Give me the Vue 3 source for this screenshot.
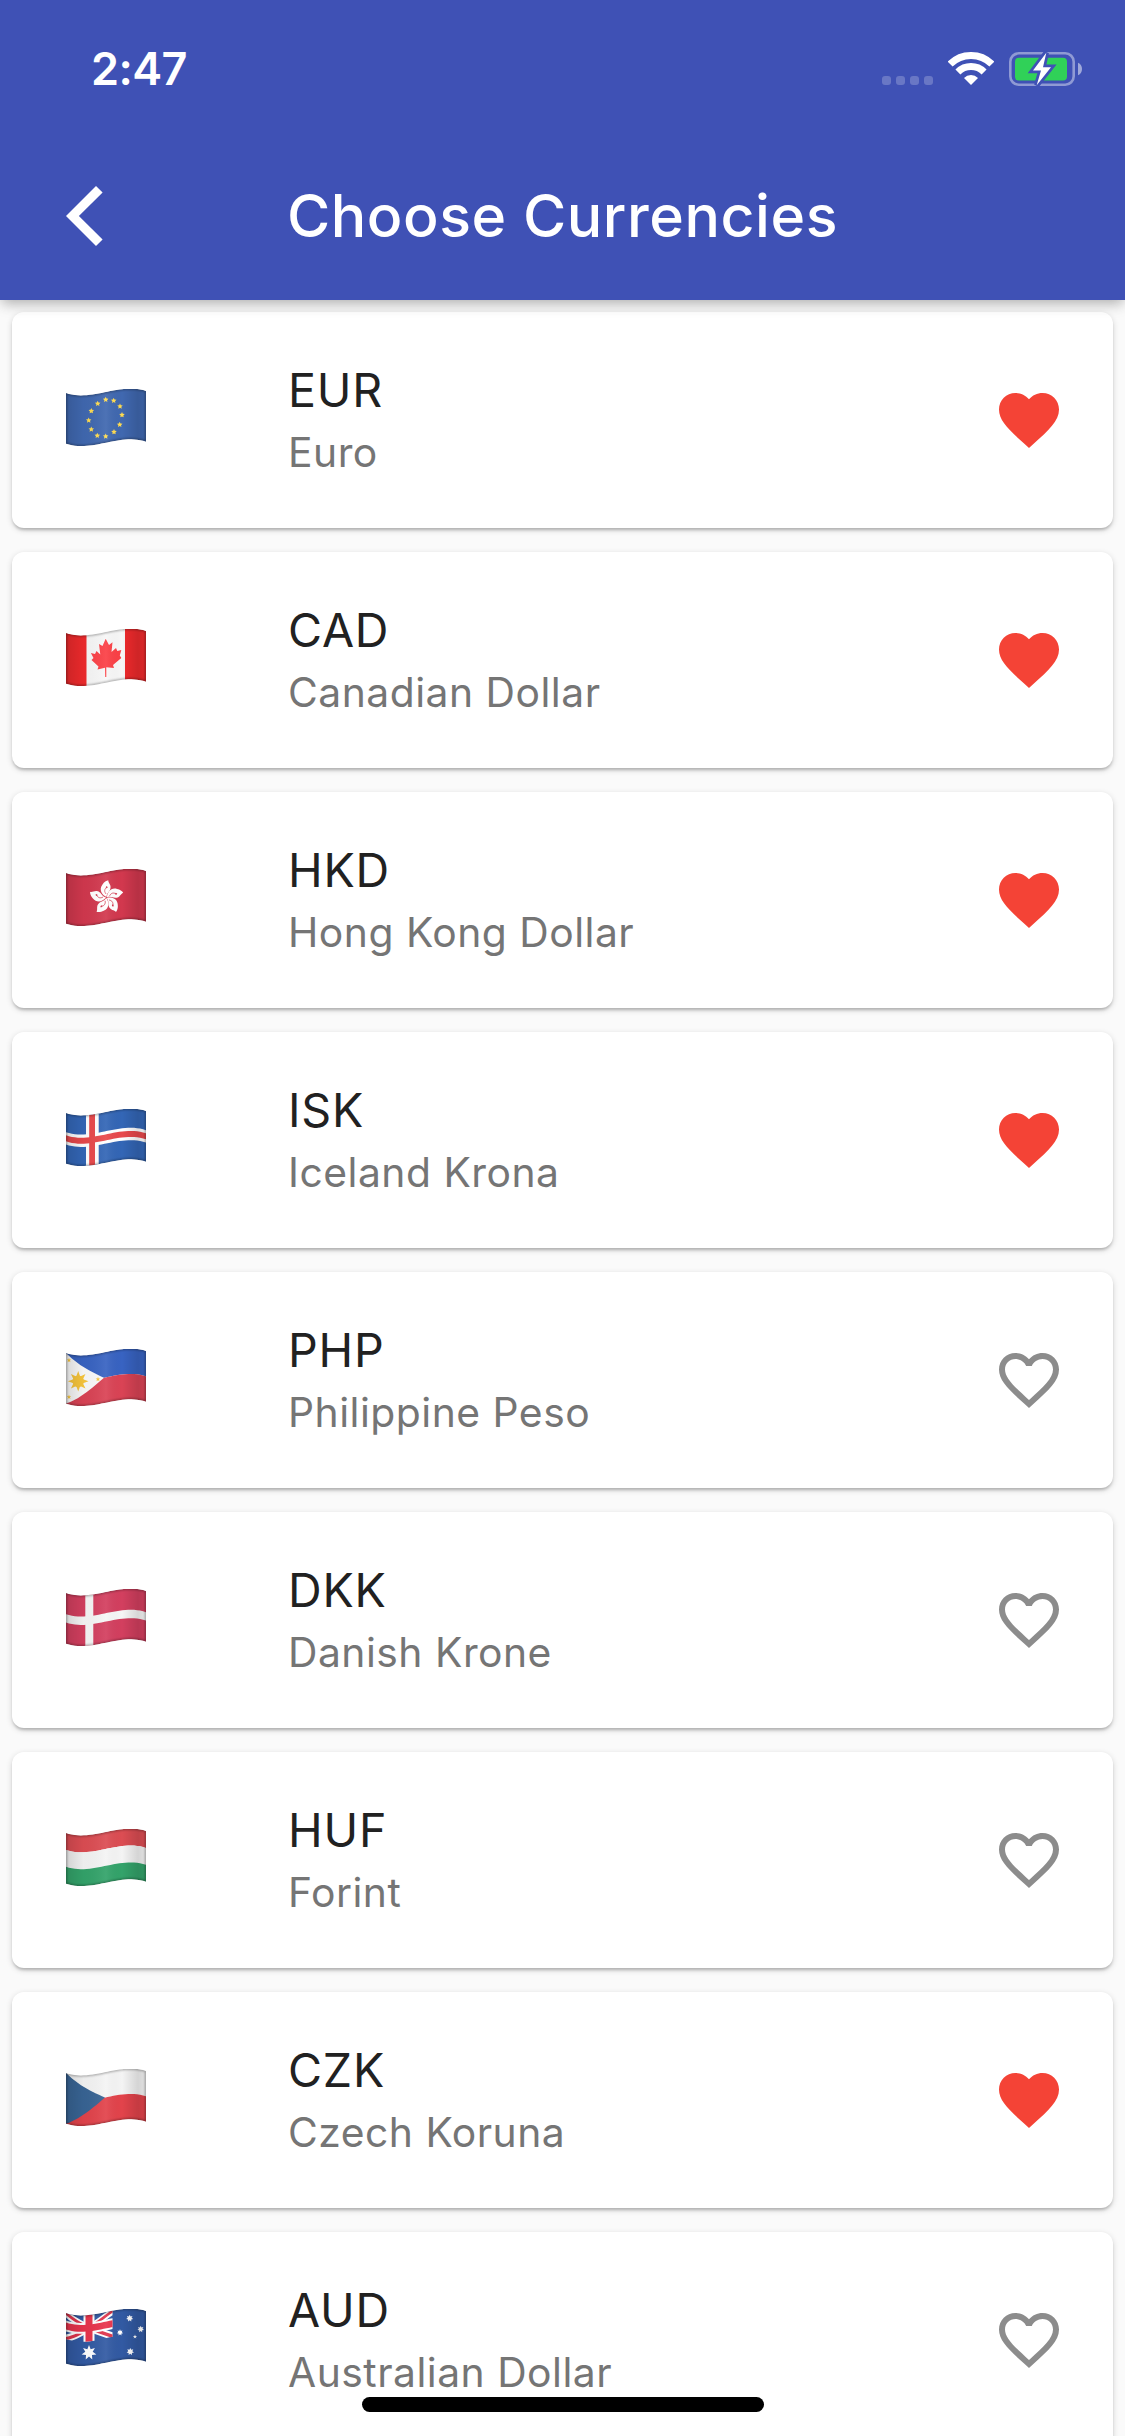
<script setup>
const FLAG_W = 80
const FLAG_H = 50.7

// Vertical displacement of the cloth at a given x
function wave(x) {
  const t = x / FLAG_W
  const u = 1 - t
  return 4 * u ** 3 + 39 * u * u * t - 21 * u * t * t + 2 * t ** 3
}

// Turns a flat polygon into one that follows the cloth
function bend(points) {
  const out = []
  points.forEach(([x0, y0], i) => {
    const [x1, y1] = points[(i + 1) % points.length]
    const steps = Math.max(1, Math.ceil(Math.abs(x1 - x0) / 3))
    for (let s = 0; s < steps; s++) {
      const x = x0 + ((x1 - x0) * s) / steps
      const y = y0 + ((y1 - y0) * s) / steps
      out.push(`${x.toFixed(2)} ${(y + wave(x)).toFixed(2)}`)
    }
  })
  return `M${out.join('L')}Z`
}

const poly = (fill, ...points) => ({ fill, d: bend(points) })
const rect = (fill, x0, y0, x1, y1) => poly(fill, [x0, y0], [x1, y0], [x1, y1], [x0, y1])

function star(fill, cx, cy, r, n = 5, inner = 0.42) {
  const pts = []
  for (let i = 0; i < n * 2; i++) {
    const a = (Math.PI * i) / n - Math.PI / 2
    const k = i % 2 ? r * inner : r
    pts.push(`${(cx + k * Math.cos(a)).toFixed(2)} ${(cy + k * Math.sin(a)).toFixed(2)}`)
  }
  return { fill, d: `M${pts.join('L')}Z` }
}

const W = FLAG_W
const H = FLAG_H
const M = H / 2
const all = (fill) => rect(fill, 0, 0, W, H)

const euStars = [
  [39.7, 10.7], [47.7, 11.7], [54, 17.3], [56, 26], [53.7, 35.7], [48, 43],
  [39.7, 47.3], [31.3, 46.7], [25.3, 40.3], [22.7, 31.3], [25.3, 22], [31.7, 14.7],
]

const flags = {
  eu: [all('#4068b0'), ...euStars.map(([x, y]) => star('#ffdc50', x, y, 2.9, 5, 0.48))],
  ca: [
    all('#f7f7f7'),
    rect('#ee2a2c', 0, 0, 20.5, H),
    rect('#ee2a2c', 59, 0, W, H),
    {
      fill: '#fb4046',
      d: 'M39.7 9.7L43 16 46.5 13.3 45.5 23 50 19 51.3 22 55.3 21 53.8 26.5 55.3 29 47 36 48 39 40.3 38.3 40.3 48H39.2L39 38.7 31.5 40.5 32.5 37.5 25.5 31 27.5 29 24.9 24 29 25 30.5 22 34.3 25.5 33 15 36.5 17Z',
    },
  ],
  hk: [
    all('#d2384e'),
    ...[0, 68, 141, 209, 283].flatMap((a) => [
      { fill: '#fff', d: 'M0-.5C-4.5-2.5-8-8-4-13C-2.5-15.5 0-17 1.8-17.3C1.5-14.5 5.5-12.5 3.6-8C2.6-5.5 .2-4.5 0-.5Z', turn: `translate(40.5 28.5) rotate(${a})` },
      { stroke: '#d2384e', d: 'M-.4-3.5C-2.6-6-2-8.5 0-10', turn: `translate(40.5 28.5) rotate(${a})` },
      { fill: '#d2384e', d: 'M-.9-10.2l1.1-1.3 1.1 1.2-1.1 1.3z', turn: `translate(40.5 28.5) rotate(${a})` },
    ]),
  ],
  is: [
    all('#3366b6'),
    rect('#fff', 20, 0, 32.7, H),
    rect('#fff', 0, M - 6.2, W, M + 6.2),
    rect('#e8484b', 23.2, 0, 29, H),
    rect('#e8484b', 0, M - 3, W, M + 3),
  ],
  ph: [
    rect('#3863c2', 0, 0, W, M),
    rect('#da4355', 0, M, W, H),
    poly('#fafafa', [0, 0], [38, M], [0, H]),
    star('#f8c63c', 12.2, 32.3, 10.3, 8, 0.5),
    { fill: '#f8c63c', d: 'M6.4 32.3a5.8 5.8 0 1 0 11.6 0a5.8 5.8 0 1 0-11.6 0Z' },
    star('#f8c63c', 3, 11.2, 2.4),
    star('#f8c63c', 32, 30.3, 2.5),
    star('#f8c63c', 3, 48, 2.4),
  ],
  dk: [
    all('#d33f5f'),
    rect('#f6f6f6', 19.3, 0, 27.3, H),
    rect('#f6f6f6', 0, M - 4.2, W, M + 4.2),
  ],
  hu: [
    rect('#dc4d53', 0, 0, W, H / 3),
    rect('#f4f4f4', 0, H / 3, W, (H * 2) / 3),
    rect('#33a36a', 0, (H * 2) / 3, W, H),
  ],
  cz: [
    rect('#f4f4f4', 0, 0, W, M),
    rect('#e2434b', 0, M, W, H),
    poly('#386494', [0, 0], [39, M], [0, H]),
  ],
  au: [
    all('#325aa3'),
    poly('#fff', [0, 0], [6, 0], [46.5, 21.5], [46.5, 26], [40.5, 26], [0, 4.5]),
    poly('#fff', [46.5, 0], [46.5, 4.5], [6, 26], [0, 26], [0, 21.5], [40.5, 0]),
    poly('#e0354c', [0, 0], [2.5, 0], [46.5, 23.8], [46.5, 26], [44, 26], [0, 2]),
    poly('#e0354c', [46.5, 0], [46.5, 2], [2.5, 26], [0, 26], [0, 24], [44, 0]),
    rect('#fff', 17.5, 0, 28.5, 26.5),
    rect('#fff', 0, 7.6, 46.5, 18.4),
    rect('#e8344c', 19.5, 0, 26.5, 26.5),
    rect('#e8344c', 0, 9.6, 46.5, 16.4),
    star('#fff', 23, 43.7, 7.6, 7, 0.5),
    star('#fff', 63.7, 9.3, 3.6, 7, 0.55),
    star('#fff', 74.7, 20.2, 3.4, 7, 0.55),
    star('#fff', 54, 23.5, 3.2, 7, 0.55),
    star('#fff', 69, 27.7, 2.2),
    star('#fff', 64.3, 42.7, 3.8, 7, 0.55),
  ],
}

const cloth = bend([[0, 0], [W, 0], [W, H], [0, H]])

const currencies = [
  { code: 'EUR', name: 'Euro', flag: 'eu', liked: true },
  { code: 'CAD', name: 'Canadian Dollar', flag: 'ca', liked: true },
  { code: 'HKD', name: 'Hong Kong Dollar', flag: 'hk', liked: true },
  { code: 'ISK', name: 'Iceland Krona', flag: 'is', liked: true },
  { code: 'PHP', name: 'Philippine Peso', flag: 'ph', liked: false },
  { code: 'DKK', name: 'Danish Krone', flag: 'dk', liked: false },
  { code: 'HUF', name: 'Forint', flag: 'hu', liked: false },
  { code: 'CZK', name: 'Czech Koruna', flag: 'cz', liked: true },
  { code: 'AUD', name: 'Australian Dollar', flag: 'au', liked: false },
]
</script>

<template>
  <div class="screen">
    <header class="header">
      <div class="status">
        <span class="time">2:47</span>
        <div class="indicators">
          <div class="dots"><i v-for="n in 4" :key="n"></i></div>
          <svg class="wifi" width="46" height="33" viewBox="0 0 46 33">
            <g fill="none" stroke="#fff" stroke-width="7">
              <path d="M2.14 12.14A29.5 29.5 0 0 1 43.86 12.14" />
              <path d="M9.92 19.92A18.5 18.5 0 0 1 36.08 19.92" />
            </g>
            <path d="M23 33L16 26A9.9 9.9 0 0 1 30 26Z" fill="#fff" />
          </svg>
          <svg class="battery" width="74" height="36" viewBox="0 0 74 36">
            <rect x="1.3" y="2.3" width="63.4" height="31.4" rx="8.5" fill="none" stroke="#fff" stroke-opacity=".42" stroke-width="2.6" />
            <path d="M69 11.7Q73 13.5 73 18T69 24.3Z" fill="#fff" fill-opacity=".5" />
            <rect x="6" y="6.8" width="52" height="22.6" rx="4" fill="#30d158" />
            <path d="M37.3 1.7L24 19.5H32L27.7 34.3L42 16.3H34Z" fill="#3f51b5" stroke="#3f51b5" stroke-width="5.4" />
            <path d="M37.3 1.7L24 19.5H32L27.7 34.3L42 16.3H34Z" fill="#fff" />
          </svg>
        </div>
      </div>
      <div class="appbar">
        <svg class="back" width="72" height="72" viewBox="0 0 24 24">
          <path d="M10 2L12.2 4.2 4.3 12l7.9 7.8L10 22 0 12z" fill="#fff" />
        </svg>
        <h1 class="title">Choose Currencies</h1>
      </div>
    </header>

    <main class="list">
      <article v-for="c in currencies" :key="c.code" class="card">
        <svg class="flag" width="80" height="58" viewBox="0 0 80 58">
          <defs>
            <linearGradient :id="`fold-${c.flag}`" x1="0" x2="1" y1="0" y2="0">
              <stop offset="0" stop-color="#000" stop-opacity=".14" />
              <stop offset=".22" stop-color="#000" stop-opacity=".03" />
              <stop offset=".5" stop-color="#fff" stop-opacity=".07" />
              <stop offset=".7" stop-color="#000" stop-opacity="0" />
              <stop offset=".9" stop-color="#000" stop-opacity=".13" />
              <stop offset="1" stop-color="#000" stop-opacity=".08" />
            </linearGradient>
            <clipPath :id="`cloth-${c.flag}`"><path :d="cloth" /></clipPath>
            <filter :id="`soft-${c.flag}`"><feGaussianBlur stdDeviation=".9" /></filter>
          </defs>
          <g :clip-path="`url(#cloth-${c.flag})`">
            <path
              v-for="(p, i) in flags[c.flag]"
              :key="i"
              :d="p.d"
              :fill="p.fill || 'none'"
              :stroke="p.stroke"
              :transform="p.turn"
              stroke-width=".7"
            />
            <path :d="cloth" :fill="`url(#fold-${c.flag})`" />
            <path :d="cloth" fill="none" stroke="#000" stroke-opacity=".36" stroke-width="2" :filter="`url(#soft-${c.flag})`" />
          </g>
        </svg>
        <div class="text">
          <div class="code">{{ c.code }}</div>
          <div class="name">{{ c.name }}</div>
        </div>
        <svg class="heart" width="72" height="72" viewBox="0 0 24 24">
          <path
            v-if="c.liked"
            fill="#f44336"
            d="M12 21.35l-1.45-1.32C5.4 15.36 2 12.28 2 8.5 2 5.42 4.42 3 7.5 3c1.74 0 3.41.81 4.5 2.09C13.09 3.81 14.76 3 16.5 3 19.58 3 22 5.42 22 8.5c0 3.78-3.4 6.86-8.55 11.54L12 21.35z"
          />
          <path
            v-else
            fill="#8c8c8c"
            d="M16.5 3c-1.74 0-3.41.81-4.5 2.09C10.91 3.81 9.24 3 7.5 3 4.42 3 2 5.42 2 8.5c0 3.78 3.4 6.86 8.55 11.54L12 21.35l1.45-1.32C18.6 15.36 22 12.28 22 8.5 22 5.42 19.58 3 16.5 3zm-4.4 15.55l-.1.1-.1-.1C7.14 14.24 4 11.39 4 8.5 4 6.5 5.5 5 7.5 5c1.54 0 3.04.99 3.57 2.36h1.87C13.46 5.99 14.96 5 16.5 5c2 0 3.5 1.5 3.5 3.5 0 2.89-3.14 5.74-7.9 10.05z"
          />
        </svg>
      </article>
    </main>
    <div class="home"></div>
  </div>
</template>

<style>
body {
  margin: 0;
}
</style>

<style scoped>
.screen {
  position: relative;
  display: flex;
  flex-direction: column;
  width: 1125px;
  height: 2436px;
  overflow: hidden;
  background: #fafafa;
  font-family: Inter, "Liberation Sans", sans-serif;
}
.header {
  position: relative;
  z-index: 1;
  flex: none;
  height: 300px;
  background: #3f51b5;
  color: #fff;
  box-shadow: 0 5px 12px -3px rgba(0, 0, 0, 0.22), 0 5px 14px rgba(0, 0, 0, 0.12);
}
.status {
  display: flex;
  justify-content: space-between;
  height: 132px;
  box-sizing: border-box;
  padding: 39px 42px 0 91px;
}
.time {
  font-size: 45px;
  font-weight: 600;
  line-height: 60px;
  letter-spacing: -0.6px;
}
.indicators {
  display: flex;
  align-items: flex-start;
  padding-top: 12px;
}
.dots {
  display: flex;
  gap: 5px;
  margin: 25px 57px 0 0;
  width: 9px;
  justify-content: flex-start;
}
.dots i {
  flex: none;
  width: 9px;
  height: 9px;
  border-radius: 3px;
  background: rgba(255, 255, 255, 0.22);
}
.wifi {
  margin: 1px 15px 0 0;
}
.appbar {
  display: grid;
  grid-template-columns: 180px 1fr 180px;
  align-items: center;
  height: 168px;
}
.back {
  margin-left: 66px;
}
.title {
  margin: 0;
  text-align: center;
  font-size: 59px;
  font-weight: 500;
  line-height: 72px;
  letter-spacing: 0.55px;
  white-space: nowrap;
}
.list {
  display: flex;
  flex-direction: column;
  gap: 24px;
  padding: 12px 12px 0;
}
.card {
  display: flex;
  flex: none;
  align-items: flex-start;
  height: 216px;
  box-sizing: border-box;
  padding: 0 48px 0 54px;
  border-radius: 12px;
  background: #fff;
  box-shadow: 0 3px 3px -1px rgba(0, 0, 0, 0.2), 0 2px 6px rgba(0, 0, 0, 0.16);
}
.flag {
  margin-top: 76.7px;
}
.text {
  flex: 1;
  margin: 48px 0 0 142px;
  white-space: nowrap;
}
.code {
  color: #212121;
  font-size: 46.6px;
  line-height: 60px;
  letter-spacing: 0.8px;
}
.name {
  margin-top: 2px;
  color: #757575;
  font-size: 40.8px;
  line-height: 60px;
  letter-spacing: 0.5px;
}
.heart {
  margin-top: 72px;
}
.home {
  position: absolute;
  z-index: 2;
  left: 362px;
  bottom: 24px;
  width: 402px;
  height: 15px;
  border-radius: 8px;
  background: #000;
}
</style>
